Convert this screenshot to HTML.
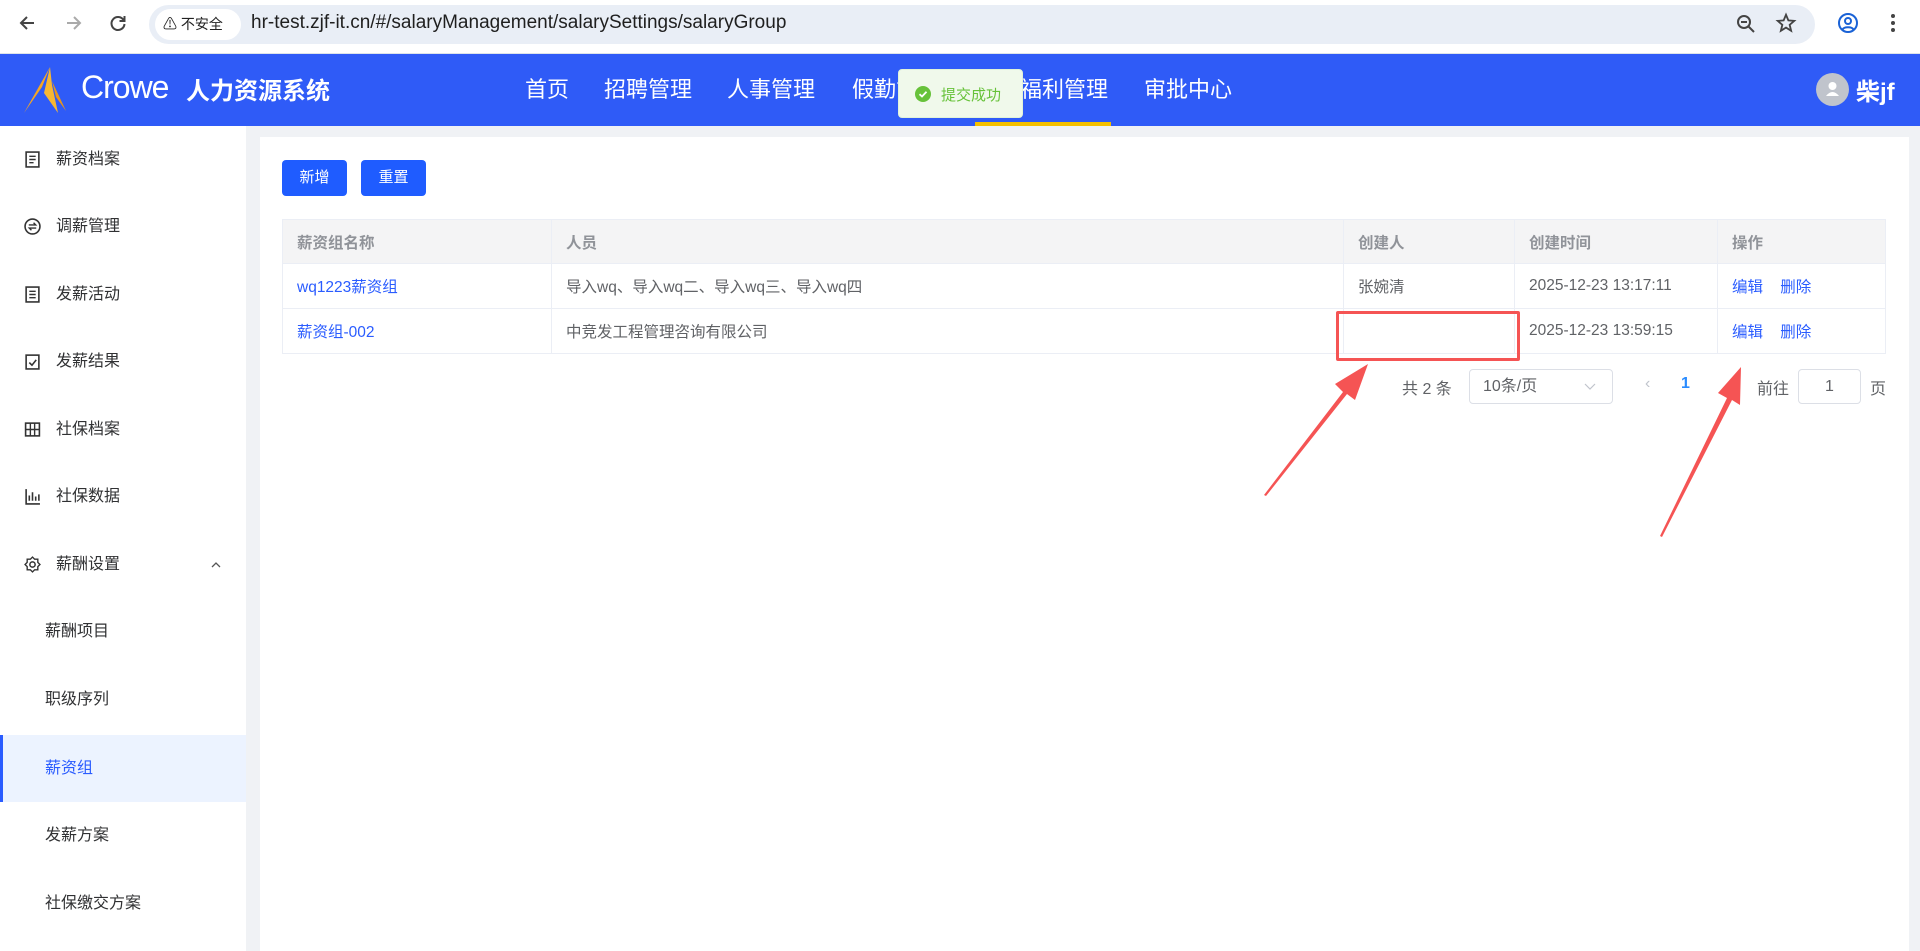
<!DOCTYPE html>
<html><head><meta charset="utf-8">
<style>
*{margin:0;padding:0;box-sizing:border-box}
body{width:1920px;height:951px;overflow:hidden;background:#f0f2f5;font-family:"Liberation Sans","Noto Sans CJK SC",sans-serif;position:relative}
.abs{position:absolute}
#chrome{left:0;top:0;width:1920px;height:54px;background:#fff;border-bottom:1px solid #dde3ea}
#url{left:149px;top:5px;width:1666px;height:39px;border-radius:20px;background:#e9eef6}
#chip{left:155px;top:9px;height:31px;width:86px;border-radius:16px;background:#fff;font-size:14px;line-height:31px;padding-left:8px;color:#222}
#urltext{left:251px;top:12px;font-size:19px;color:#1f1f1f;white-space:nowrap}
#nav{left:0;top:54px;width:1920px;height:72px;background:#2f5bf7}
.ni{top:72px;font-size:22px;color:#fff;white-space:nowrap}
#side{left:0;top:126px;width:246px;height:825px;background:#fff}
.si{position:absolute;left:0;width:246px;height:67px;font-size:16px;color:#303133;line-height:67px}
.si svg{position:absolute;left:24px;top:25px}
.si .t{position:absolute;left:56px}
.si .s{position:absolute;left:45px}
#panel{left:260px;top:137px;width:1649px;height:814px;background:#fff}
.btn{top:160px;height:36px;width:65px;background:#1f5cff;border-radius:4px;color:#fff;font-size:15px;line-height:36px;text-align:center}
table{position:absolute;left:282px;top:219px;width:1604px;border-collapse:collapse;font-size:15.5px}
td,th{border:1px solid #ebeef5;text-align:left;padding-left:14px;font-weight:normal;vertical-align:middle}
th{background:#f4f4f5;color:#909399;height:44px;font-weight:bold}
td{height:45px;color:#606266}
a{color:#2a5cff;text-decoration:none}
.pg{font-size:16px;color:#606266;top:375px}
</style></head><body>
<div id="chrome" class="abs"></div>
<svg class="abs" style="left:17px;top:13px" width="20" height="20" viewBox="0 0 20 20"><path d="M17 10H4M10 4L4 10L10 16" stroke="#444" stroke-width="2" fill="none"/></svg>
<svg class="abs" style="left:64px;top:13px" width="20" height="20" viewBox="0 0 20 20"><path d="M3 10H16M10 4L16 10L10 16" stroke="#aaa" stroke-width="2" fill="none"/></svg>
<svg class="abs" style="left:108px;top:13px" width="20" height="20" viewBox="0 0 20 20"><path d="M15.5 7A6.5 6.5 0 1 0 16.5 11" stroke="#444" stroke-width="2" fill="none"/><path d="M16.5 3V8H11.5" stroke="#444" stroke-width="2" fill="none"/></svg>
<div id="url" class="abs"></div>
<div id="chip" class="abs">⚠ 不安全</div>
<div id="urltext" class="abs">hr-test.zjf-it.cn/#/salaryManagement/salarySettings/salaryGroup</div>
<svg class="abs" style="left:1735px;top:13px" width="22" height="22" viewBox="0 0 22 22"><circle cx="9" cy="9" r="6" stroke="#444" stroke-width="2" fill="none"/><path d="M13.5 13.5L19 19M6 9H12" stroke="#444" stroke-width="2"/></svg>
<svg class="abs" style="left:1775px;top:12px" width="22" height="22" viewBox="0 0 24 24"><path d="M12 3L14.6 9.2 21 9.7 16 14 17.6 20.5 12 17 6.4 20.5 8 14 3 9.7 9.4 9.2Z" stroke="#444" stroke-width="2" fill="none"/></svg>
<svg class="abs" style="left:1836px;top:11px" width="24" height="24" viewBox="0 0 24 24"><circle cx="12" cy="12" r="9" stroke="#1a62d6" stroke-width="2" fill="none"/><circle cx="12" cy="10" r="3" stroke="#1a62d6" stroke-width="2" fill="none"/><path d="M6.5 18.5C8 15.5 16 15.5 17.5 18.5" stroke="#1a62d6" stroke-width="2" fill="none"/></svg>
<svg class="abs" style="left:1890px;top:13px" width="6" height="20"><circle cx="3" cy="3" r="2" fill="#444"/><circle cx="3" cy="10" r="2" fill="#444"/><circle cx="3" cy="17" r="2" fill="#444"/></svg>

<div id="nav" class="abs"></div>
<svg class="abs" style="left:22px;top:67px" width="50" height="46" viewBox="0 0 50 46"><path d="M28 0L2 46L20 20Z" fill="#f5a623"/><path d="M28 0L22 26L36 46L30 18Z" fill="#f7b733"/><path d="M30 14L44 44L34 30Z" fill="#e8951c"/></svg>
<div class="abs" style="left:81px;top:69px;font-size:32px;color:#fff;letter-spacing:-1px">Crowe</div>
<div class="abs" style="left:186px;top:71px;font-size:24px;color:#fff;font-weight:bold">人力资源系统</div>
<div class="abs ni" style="left:525px">首页</div>
<div class="abs ni" style="left:604px">招聘管理</div>
<div class="abs ni" style="left:727px">人事管理</div>
<div class="abs ni" style="left:852px">假勤管理</div>
<div class="abs ni" style="left:976px">薪酬福利管理</div>
<div class="abs ni" style="left:1144px">审批中心</div>
<div class="abs" style="left:975px;top:122px;width:136px;height:4px;background:#f5c000"></div>
<div class="abs" style="left:898px;top:69px;width:125px;height:49px;background:#f0f9eb;border:1px solid #e1f3d8;border-radius:4px"></div>
<svg class="abs" style="left:915px;top:86px" width="16" height="16" viewBox="0 0 16 16"><circle cx="8" cy="8" r="8" fill="#67c23a"/><path d="M4.5 8.2L7 10.5 11.5 5.8" stroke="#fff" stroke-width="1.8" fill="none"/></svg>
<div class="abs" style="left:941px;top:84px;font-size:15px;color:#67c23a">提交成功</div>
<div class="abs" style="left:1816px;top:73px;width:33px;height:33px;border-radius:50%;background:#c0c4cc"></div>
<svg class="abs" style="left:1823px;top:79px" width="19" height="20" viewBox="0 0 19 20"><circle cx="9.5" cy="7" r="4" fill="#fff"/><path d="M3 17Q9.5 9 16 17Z" fill="#fff"/></svg>
<div class="abs" style="left:1856px;top:72px;font-size:24px;color:#fff;font-weight:bold">柴jf</div>

<div id="side" class="abs">
<div class="si" style="top:0"><svg width="17" height="17" viewBox="0 0 16 16"><rect x="2" y="1" width="12" height="14" stroke="#333" stroke-width="1.5" fill="none"/><path d="M5 5H11M5 8H11M5 11H9" stroke="#333" stroke-width="1.3"/></svg><span class="t">薪资档案</span></div>
<div class="si" style="top:67px"><svg width="17" height="17" viewBox="0 0 16 16"><circle cx="8" cy="8" r="7" stroke="#333" stroke-width="1.5" fill="none"/><path d="M4.5 6.5H11L9 4.5M11.5 9.5H5L7 11.5" stroke="#333" stroke-width="1.3" fill="none"/></svg><span class="t">调薪管理</span></div>
<div class="si" style="top:135px"><svg width="17" height="17" viewBox="0 0 16 16"><rect x="2" y="1" width="12" height="14" stroke="#333" stroke-width="1.5" fill="none"/><path d="M5 5H11M5 8H11M5 11H11" stroke="#333" stroke-width="1.3"/></svg><span class="t">发薪活动</span></div>
<div class="si" style="top:202px"><svg width="17" height="17" viewBox="0 0 16 16"><rect x="2" y="2" width="12" height="13" stroke="#333" stroke-width="1.5" fill="none"/><path d="M5 9L7.5 11.5 11.5 6.5" stroke="#333" stroke-width="1.5" fill="none"/></svg><span class="t">发薪结果</span></div>
<div class="si" style="top:270px"><svg width="17" height="17" viewBox="0 0 16 16"><rect x="1.5" y="2" width="13" height="12" stroke="#333" stroke-width="1.5" fill="none"/><path d="M6 2V14M10 2V14M1.5 8H14.5" stroke="#333" stroke-width="1.3"/></svg><span class="t">社保档案</span></div>
<div class="si" style="top:337px"><svg width="17" height="17" viewBox="0 0 16 16"><path d="M2 1V15H15M5 12V7M8 12V4M11 12V8M14 12V6" stroke="#333" stroke-width="1.5" fill="none"/></svg><span class="t">社保数据</span></div>
<div class="si" style="top:405px"><svg width="17" height="17" viewBox="0 0 16 16"><circle cx="8" cy="8" r="2.5" stroke="#333" stroke-width="1.4" fill="none"/><path d="M8 1L10 3 13 3 13 6 15 8 13 10 13 13 10 13 8 15 6 13 3 13 3 10 1 8 3 6 3 3 6 3Z" stroke="#333" stroke-width="1.3" fill="none"/></svg><span class="t">薪酬设置</span><svg style="left:211px;top:30px" width="10" height="7" viewBox="0 0 10 7"><path d="M1 6L5 2 9 6" stroke="#555" stroke-width="1.3" fill="none"/></svg></div>
<div class="si" style="top:472px"><span class="s">薪酬项目</span></div>
<div class="si" style="top:540px"><span class="s">职级序列</span></div>
<div class="si" style="top:609px;background:#ecf3ff;color:#2a5cff;border-left:3px solid #2a5cff"><span class="s" style="left:42px">薪资组</span></div>
<div class="si" style="top:676px"><span class="s">发薪方案</span></div>
<div class="si" style="top:744px"><span class="s">社保缴交方案</span></div>
</div>

<div id="panel" class="abs"></div>
<div class="abs btn" style="left:282px">新增</div>
<div class="abs btn" style="left:361px">重置</div>
<table>
<tr><th style="width:269px">薪资组名称</th><th style="width:792px">人员</th><th style="width:171px">创建人</th><th style="width:203px">创建时间</th><th>操作</th></tr>
<tr><td><a>wq1223薪资组</a></td><td>导入wq、导入wq二、导入wq三、导入wq四</td><td>张婉清</td><td>2025-12-23 13:17:11</td><td><a>编辑</a>&nbsp;&nbsp;&nbsp;&nbsp;<a>删除</a></td></tr>
<tr><td><a>薪资组-002</a></td><td>中竞发工程管理咨询有限公司</td><td></td><td>2025-12-23 13:59:15</td><td><a>编辑</a>&nbsp;&nbsp;&nbsp;&nbsp;<a>删除</a></td></tr>
</table>
<div class="abs" style="left:1336px;top:311px;width:184px;height:50px;border:3px solid #f55454;border-radius:2px"></div>
<div class="abs pg" style="left:1402px">共 2 条</div>
<div class="abs" style="left:1469px;top:369px;width:144px;height:35px;border:1px solid #dcdfe6;border-radius:4px;font-size:16px;color:#606266;line-height:33px;padding-left:13px">10条/页</div>
<svg class="abs" style="left:1584px;top:383px" width="12" height="8" viewBox="0 0 12 8"><path d="M1 1L6 6 11 1" stroke="#c0c4cc" stroke-width="1.2" fill="none"/></svg>
<div class="abs pg" style="left:1645px;color:#c0c4cc">‹</div>
<div class="abs pg" style="left:1681px;color:#2a8cff;font-weight:bold">1</div>
<div class="abs pg" style="left:1757px">前往</div>
<div class="abs" style="left:1798px;top:369px;width:63px;height:35px;border:1px solid #dcdfe6;border-radius:4px;font-size:16px;color:#606266;line-height:33px;text-align:center">1</div>
<div class="abs pg" style="left:1870px">页</div>
<svg class="abs" style="left:0;top:0" width="1920" height="951">
<polygon points="1264,495 1343,392 1335,384 1368,364 1355,400 1347,394 1266,496" fill="#f55454"/>
<polygon points="1660,536 1727,398 1718,393 1741,367 1740,405 1732,400 1662,537" fill="#f55454"/>
</svg>
</body></html>
